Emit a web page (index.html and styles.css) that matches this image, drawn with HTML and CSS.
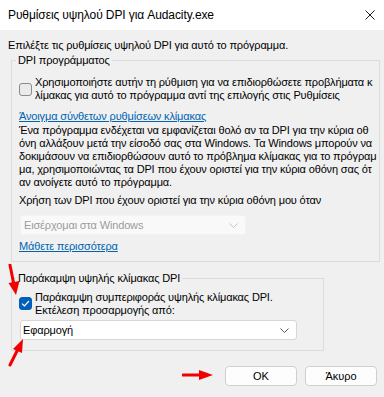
FILE: index.html
```html
<!DOCTYPE html>
<html lang="el">
<head>
    <meta charset="UTF-8">
    <meta name="viewport" content="width=device-width, initial-scale=1.0">
    <title>Ρυθμίσεις υψηλού DPI για Audacity.exe</title>
    <link rel="stylesheet" href="styles.css">
</head>
<body>
    <div class="window">
        <div class="titlebar">
            <span class="title">Ρυθμίσεις υψηλού DPI για Audacity.exe</span>
            <svg class="close" width="10" height="10" viewBox="0 0 10 10">
                <path d="M0.5 0.5 L9.5 9.5 M9.5 0.5 L0.5 9.5" stroke="#1a1a1a" stroke-width="1" fill="none"/>
            </svg>
        </div>
        <div class="content">
            <p class="intro">Επιλέξτε τις ρυθμίσεις υψηλού DPI για αυτό το πρόγραμμα.</p>

            <fieldset class="group group-wide">
                <legend>DPI προγράμματος</legend>
                <label class="check-row">
                    <span class="checkbox"></span>
                    <span class="check-text">Χρησιμοποιήστε αυτήν τη ρύθμιση για να επιδιορθώσετε προβλήματα κ<br>λίμακας για αυτό το πρόγραμμα αντί της επιλογής στις Ρυθμίσεις</span>
                </label>
                <a class="link link-top" href="#">Άνοιγμα σύνθετων ρυθμίσεων κλίμακας</a>
                <p class="desc">Ένα πρόγραμμα ενδέχεται να εμφανίζεται θολό αν τα DPI για την κύρια οθ<br>όνη αλλάξουν μετά την είσοδό σας στα Windows. Τα Windows μπορούν να<br>δοκιμάσουν να επιδιορθώσουν αυτό το πρόβλημα κλίμακας για το πρόγραμ<br>μα, χρησιμοποιώντας τα DPI που έχουν οριστεί για την κύρια οθόνη σας ότ<br>αν ανοίγετε αυτό το πρόγραμμα.</p>
                <p class="usage">Χρήση των DPI που έχουν οριστεί για την κύρια οθόνη μου όταν</p>
                <div class="select select-disabled">
                    <span>Εισέρχομαι στα Windows</span>
                    <svg class="chevron" width="9" height="5" viewBox="0 0 9 5">
                        <path d="M0.5 0.5 L4.5 4.5 L8.5 0.5" stroke="#c4c4c4" fill="none"/>
                    </svg>
                </div>
                <a class="link link-more" href="#">Μάθετε περισσότερα</a>
            </fieldset>

            <fieldset class="group group-narrow">
                <legend>Παράκαμψη υψηλής κλίμακας DPI</legend>
                <label class="check-row check-row-on">
                    <span class="checkbox checked">
                        <svg width="9" height="7" viewBox="0 0 9 7">
                            <path d="M1 3.6 L3.4 6 L8 1" stroke="#fff" stroke-width="1.2" fill="none"/>
                        </svg>
                    </span>
                    <span class="check-text">Παράκαμψη συμπεριφοράς υψηλής κλίμακας DPI.<br>Εκτέλεση προσαρμογής από:</span>
                </label>
                <div class="select select-app">
                    <span>Εφαρμογή</span>
                    <svg class="chevron" width="9" height="5" viewBox="0 0 9 5">
                        <path d="M0.5 0.5 L4.5 4.5 L8.5 0.5" stroke="#5a5a5a" fill="none"/>
                    </svg>
                </div>
            </fieldset>

            <div class="buttons">
                <button class="btn">OK</button>
                <button class="btn">Άκυρο</button>
            </div>
        </div>

        <!-- annotation arrows -->
        <svg class="arrow arrow-down" width="14" height="32" viewBox="0 0 14 32">
            <path d="M3 1 L7 21" stroke="#f20000" stroke-width="3" stroke-linecap="round"/>
            <path d="M1.5 19 L12.5 17 L9 31 Z" fill="#f20000"/>
        </svg>
        <svg class="arrow arrow-up" width="20" height="30" viewBox="0 0 20 30">
            <path d="M2 28 L10 12" stroke="#f20000" stroke-width="3" stroke-linecap="round"/>
            <path d="M5 12 L14 16 L15 2 Z" fill="#f20000"/>
        </svg>
        <svg class="arrow arrow-right" width="34" height="12" viewBox="0 0 34 12">
            <path d="M1 6 L20 6" stroke="#f20000" stroke-width="3" stroke-linecap="round"/>
            <path d="M17 1 L31 6 L17 11 Z" fill="#f20000"/>
        </svg>
    </div>
</body>
</html>
```

FILE: styles.css
```css
* {
    box-sizing: border-box;
}

body {
    margin: 0;
    font-family: "Liberation Sans", Arial, sans-serif;
    font-size: 11px;
    line-height: 13px;
    letter-spacing: -0.15px;
    color: #000;
    background: #f0f0f0;
}

.window {
    position: relative;
    width: 384px;
    height: 397px;
    overflow: hidden;
}

.titlebar {
    height: 30px;
    background: #fff;
    display: flex;
    align-items: center;
    justify-content: space-between;
    padding: 0 9px 0 8px;
}

.title {
    font-size: 12px;
    letter-spacing: -0.1px;
    color: #000;
}

.content {
    padding: 9px 4px 0 11px;
}

p {
    margin: 0;
}

.intro {
    margin-left: -3px;
    white-space: nowrap;
}

.group {
    margin: 2px 0 0 0;
    border: 1px solid #dcdcdc;
    padding: 0 4px 8px 7px;
    min-width: 0;
}

.group legend {
    padding: 0 2px;
    margin-left: -3px;
    line-height: 13px;
}

.group-wide {
    width: 369px;
}

.group-narrow {
    width: 313px;
    margin-top: 10px;
    padding-bottom: 10px;
}

.check-row {
    display: flex;
    align-items: center;
    gap: 3px;
    margin-top: 9px;
    white-space: nowrap;
}

.check-row-on {
    margin-top: 6px;
    align-items: flex-start;
}

.check-row-on .checkbox {
    margin-top: 6px;
}

.checkbox {
    flex: none;
    width: 13px;
    height: 13px;
    border: 1px solid #8b8b8b;
    border-radius: 3px;
    background: #ebebeb;
    display: flex;
    align-items: center;
    justify-content: center;
}

.checkbox.checked {
    background: #005fb8;
    border-color: #005fb8;
}

.link {
    display: block;
    color: #0063b1;
    text-decoration: underline;
    width: max-content;
}

.link-top {
    margin-top: 8px;
}

.link-more {
    margin-top: 5px;
}

.desc {
    margin-top: 1px;
    white-space: nowrap;
}

.usage {
    margin-top: 5px;
    white-space: nowrap;
}

.select {
    display: flex;
    align-items: center;
    justify-content: space-between;
    height: 20px;
    margin-left: 1px;
    padding: 0 7px 0 3px;
    border-radius: 3px;
}

.select-disabled {
    width: 226px;
    margin-top: 8px;
    background: #f9f9f9;
    border: 1px solid #f3f3f3;
    color: #9b9b9b;
}

.select-app {
    width: 277px;
    margin-top: 3px;
    background: #fff;
    border: 1px solid #d6d6d6;
    padding-left: 2px;
}

.buttons {
    display: flex;
    justify-content: flex-end;
    gap: 8px;
    margin-top: 15px;
    padding-right: 3px;
}

.btn {
    width: 72px;
    height: 20px;
    padding: 0;
    font-family: inherit;
    font-size: 11px;
    color: #000;
    background: #fdfdfd;
    border: 1px solid #d0d0d0;
    border-radius: 4px;
}

.arrow {
    position: absolute;
}

.arrow-down {
    left: 7px;
    top: 264px;
}

.arrow-up {
    left: 8px;
    top: 337px;
}

.arrow-right {
    left: 182px;
    top: 369px;
}
```
